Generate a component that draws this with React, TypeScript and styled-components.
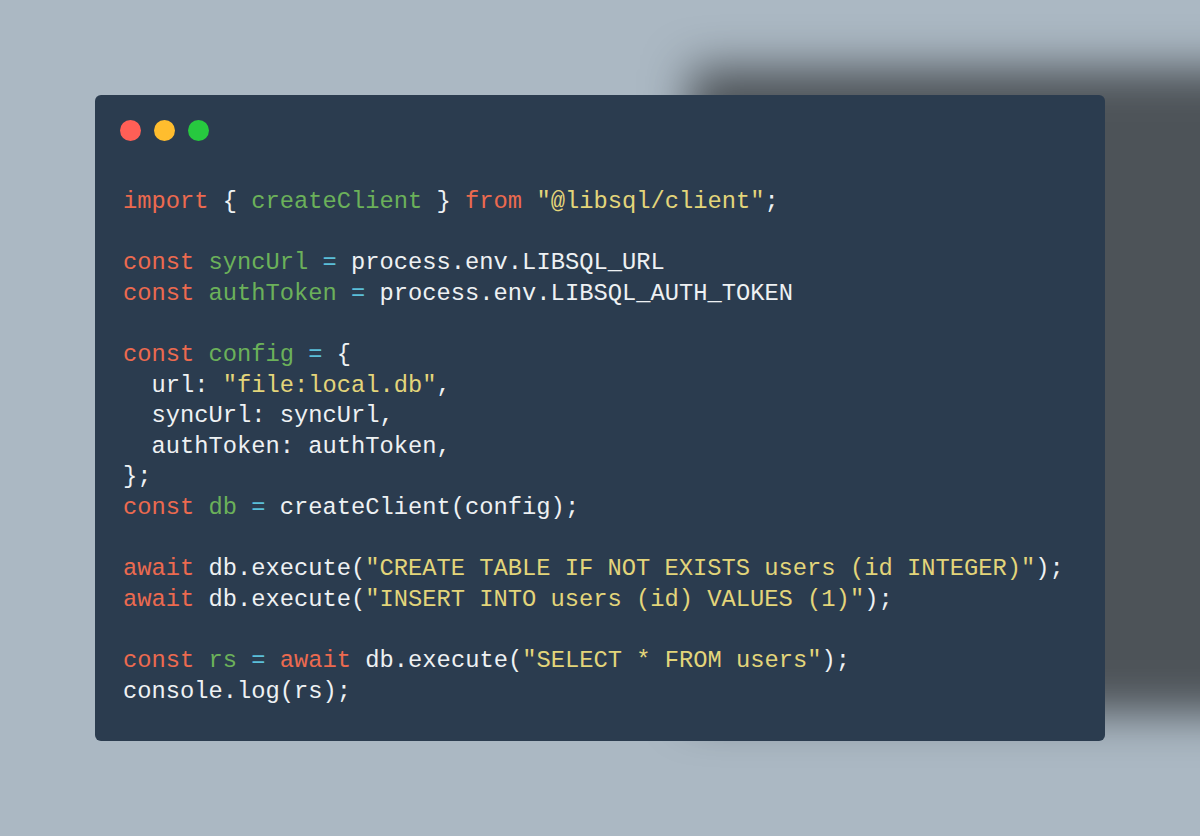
import React from "react";
import styled, { createGlobalStyle } from "styled-components";

const Global = createGlobalStyle`
  html, body { margin: 0; padding: 0; }
  body { background: #abb8c3; width: 1200px; height: 836px; overflow: hidden; }
`;

const Page = styled.div`
  width: 1200px;
  height: 836px;
  box-sizing: border-box;
  padding: 95px 95px;
  background: #abb8c3;
`;

const Window = styled.div`
  width: 1010px;
  height: 646px;
  box-sizing: border-box;
  background: #2b3c4f;
  border-radius: 6px;
  box-shadow: 595px -27px 45px rgba(0, 0, 0, 0.55);
  display: flex;
  flex-direction: column;
`;

const Header = styled.div`
  display: flex;
  gap: 13px;
  padding: 25px 0 0 25px;
`;

const Dot = styled.span<{ $c: string }>`
  width: 21px;
  height: 21px;
  border-radius: 50%;
  background: ${(p) => p.$c};
`;

const Code = styled.pre`
  margin: 46px 0 0 0;
  padding: 0 0 0 28px;
  font-family: "Liberation Mono", "DejaVu Sans Mono", monospace;
  font-size: 23.75px;
  line-height: 30.6px;
  color: #eef1f3;
  white-space: pre;
`;

const K = styled.span`color: #ec6a4f;`;
const V = styled.span`color: #6bb15a;`;
const S = styled.span`color: #e3d57a;`;
const O = styled.span`color: #5bbfd9;`;

export default function App() {
  return (
    <>
      <Global />
      <Page>
        <Window>
          <Header>
            <Dot $c="#ff5f56" />
            <Dot $c="#ffbd2e" />
            <Dot $c="#27c93f" />
          </Header>
          <Code>
<K>import</K> {"{ "}<V>createClient</V>{" } "}<K>from</K> <S>"@libsql/client"</S>;{"\n"}
{"\n"}
<K>const</K> <V>syncUrl</V> <O>=</O> process.env.LIBSQL_URL{"\n"}
<K>const</K> <V>authToken</V> <O>=</O> process.env.LIBSQL_AUTH_TOKEN{"\n"}
{"\n"}
<K>const</K> <V>config</V> <O>=</O> {"{"}{"\n"}
{"  "}url: <S>"file:local.db"</S>,{"\n"}
{"  "}syncUrl: syncUrl,{"\n"}
{"  "}authToken: authToken,{"\n"}
{"};"}{"\n"}
<K>const</K> <V>db</V> <O>=</O> createClient(config);{"\n"}
{"\n"}
<K>await</K> db.execute(<S>"CREATE TABLE IF NOT EXISTS users (id INTEGER)"</S>);{"\n"}
<K>await</K> db.execute(<S>"INSERT INTO users (id) VALUES (1)"</S>);{"\n"}
{"\n"}
<K>const</K> <V>rs</V> <O>=</O> <K>await</K> db.execute(<S>"SELECT * FROM users"</S>);{"\n"}
console.log(rs);
          </Code>
        </Window>
      </Page>
    </>
  );
}
